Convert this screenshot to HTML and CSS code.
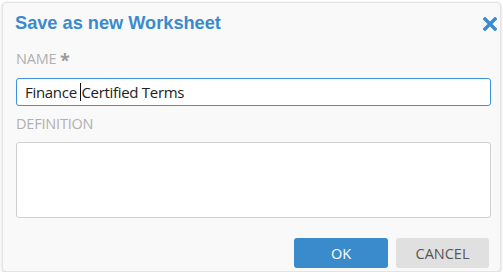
FILE: index.html
```html
<!DOCTYPE html>
<html>
<head>
<meta charset="utf-8">
<link rel="stylesheet" href="styles.css">
</head>
<body>
<div class="dialog">
  <div class="header">
    <h1 class="title">Save as new Worksheet</h1>
    <span class="close">
      <svg width="14" height="14" viewBox="0 0 14 14"><path d="M2 2 L12 12 M12 2 L2 12" stroke="#3a8bcd" stroke-width="3.4" stroke-linecap="square"/></svg>
    </span>
  </div>
  <div class="body">
    <label class="label">NAME <span class="req">*</span></label>
    <div class="input"><span>Finance </span><span class="caret"></span><span>Certified Terms</span></div>
    <label class="label label-def">DEFINITION</label>
    <div class="textarea"></div>
  </div>
  <div class="footer">
    <button class="btn btn-ok">OK</button>
    <button class="btn btn-cancel">CANCEL</button>
  </div>
</div>
</body>
</html>
```
FILE: styles.css
```css
html, body {
  margin: 0;
  padding: 0;
  background: #ffffff;
}
.dialog {
  margin: 2px 0 0 2px;
  width: 499px;
  height: 270px;
  box-sizing: border-box;
  background: #f9f9f9;
  border: 1px solid #e4e4e4;
  border-radius: 4px;
  box-shadow: 0 1px 3px rgba(0,0,0,0.18);
  display: flex;
  flex-direction: column;
  font-family: "Open Sans", "Noto Sans", sans-serif;
}
.header {
  display: flex;
  align-items: center;
  justify-content: space-between;
  padding: 7px 3px 0 12px;
  height: 27px;
}
.title {
  margin: 0;
  font-family: "Liberation Sans", Arial, sans-serif;
  font-weight: bold;
  font-size: 18.2px;
  color: #3a8bcd;
}
.close {
  display: flex;
  width: 14px;
  height: 14px;
  margin-top: 1px;
}
.body {
  display: flex;
  flex-direction: column;
  padding: 0 9px 0 13px;
}
.label {
  font-size: 14.5px;
  letter-spacing: -0.2px;
  color: #b0b0b0;
  line-height: 20px;
  margin-top: 12px;
  height: 20px;
}
.req {
  color: #9a9a9a;
  font-size: 18px;
  font-weight: bold;
  vertical-align: -3px;
  line-height: 1;
}
.label-def {
  margin-top: 8px;
}
.input {
  margin-top: 9px;
  height: 28px;
  box-sizing: border-box;
  border: 1px solid #3c93dc;
  border-radius: 3px;
  background: #fff;
  display: flex;
  align-items: center;
  padding-left: 8px;
  font-size: 15px;
  letter-spacing: -0.3px;
  color: #222;
  white-space: pre;
}
.caret {
  display: inline-block;
  width: 1px;
  height: 18px;
  background: #111;
}
.textarea {
  margin-top: 8px;
  height: 76px;
  box-sizing: border-box;
  border: 1px solid #cfcfcf;
  border-radius: 3px;
  background: #fff;
}
.footer {
  display: flex;
  justify-content: flex-end;
  gap: 8px;
  padding: 20px 11px 0 0;
}
.btn {
  width: 94px;
  height: 30px;
  border: none;
  border-radius: 3px;
  font-family: "Open Sans", "Noto Sans", sans-serif;
  font-size: 14.5px;
  padding: 0;
}
.btn-ok {
  background: #3a8bcc;
  color: #fff;
}
.btn-cancel {
  width: 93px;
  background: #e0e0e0;
  color: #555;
}
```
